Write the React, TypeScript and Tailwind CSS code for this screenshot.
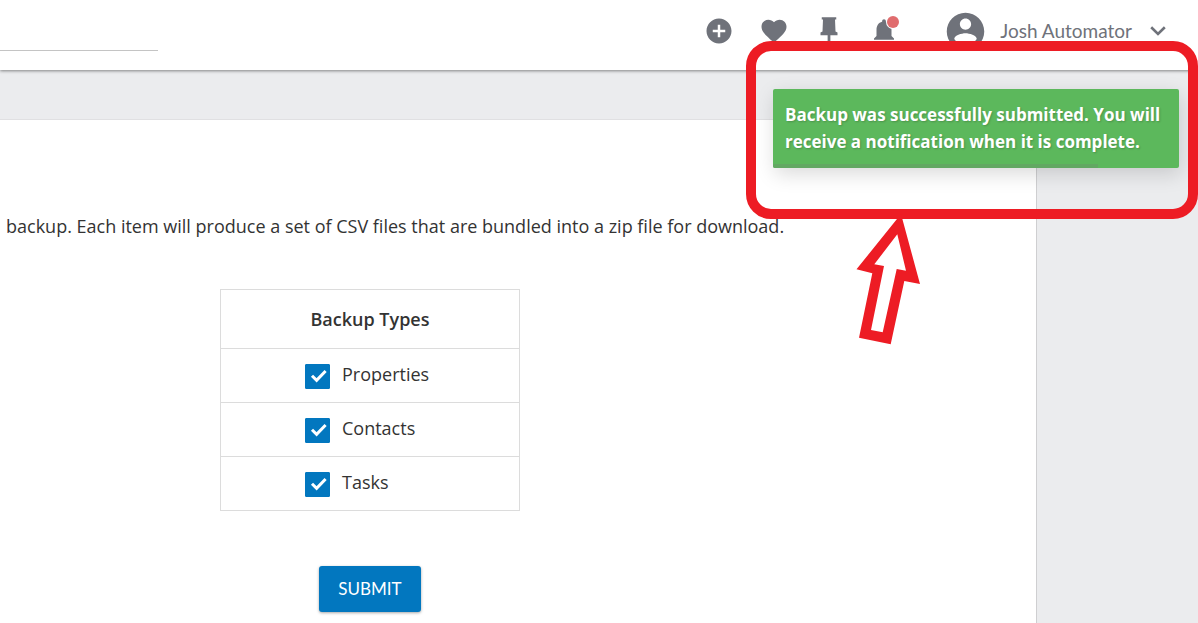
import React, { useState } from "react";

const ICONS = [
  {
    label: "Add",
    path: "M12 2C6.48 2 2 6.48 2 12s4.48 10 10 10 10-4.48 10-10S17.52 2 12 2zm5 11h-4v4h-2v-4H7v-2h4V7h2v4h4v2z",
  },
  {
    label: "Favorites",
    path: "M12 21.35l-1.45-1.32C5.4 15.36 2 12.28 2 8.5 2 5.42 4.42 3 7.5 3c1.74 0 3.41.81 4.5 2.09C13.09 3.81 14.76 3 16.5 3 19.58 3 22 5.42 22 8.5c0 3.78-3.4 6.86-8.55 11.54L12 21.35z",
  },
  {
    label: "Pinned",
    path: "M6.2 0.9H17.8V2.8H16.8L17.2 12.4L18.8 13.2V15.3H13.1V24H10.9V15.3H5.2V13.2L6.8 12.4L7.2 2.8H6.2Z",
  },
  {
    label: "Notifications",
    path: "M12 22c1.1 0 2-.9 2-2h-4c0 1.1.89 2 2 2zm6-6v-5c0-3.07-1.64-5.64-4.5-6.32V4c0-.83-.67-1.5-1.5-1.5s-1.5.67-1.5 1.5v.68C7.63 5.36 6 7.92 6 11v5l-2 2v1h16v-1l-2-2z",
    badge: true,
  },
];

const BACKUP_TYPES = ["Properties", "Contacts", "Tasks"];

const Header: React.FC = () => (
  <header className="relative z-10 flex h-[70px] items-center bg-white pr-8 text-[#6f727a] shadow-[0_1px_3px_rgba(0,0,0,0.45)]">
    <input
      type="search"
      aria-label="Search"
      className="h-8 w-[158px] border-b border-[#c4c4c4] outline-none"
    />
    <nav className="ml-auto flex items-center gap-[25px] pb-2">
      {ICONS.map((icon) => (
        <button key={icon.label} aria-label={icon.label} className="relative">
          <svg viewBox="0 0 24 24" className="size-[30px]" fill="currentColor">
            <path d={icon.path} />
          </svg>
          {icon.badge && (
            <span className="absolute top-0 right-0 size-3 rounded-full bg-[#e06c6e] ring-1 ring-white" />
          )}
        </button>
      ))}
    </nav>
    <button className="ml-11 flex items-center gap-3 pb-2">
      <svg viewBox="0 0 24 24" className="size-[45px]" fill="currentColor">
        <path d="M12 2C6.48 2 2 6.48 2 12s4.48 10 10 10 10-4.48 10-10S17.52 2 12 2zm0 3c1.66 0 3 1.34 3 3s-1.34 3-3 3-3-1.34-3-3 1.34-3 3-3zm0 14.2c-2.5 0-4.71-1.28-6-3.22.03-1.99 4-3.08 6-3.08 1.99 0 5.97 1.09 6 3.08-1.29 1.94-3.5 3.22-6 3.22z" />
      </svg>
      <span className="font-['Lato',sans-serif] text-[19px]">
        Josh Automator
      </span>
      <svg
        viewBox="0 0 16 10"
        className="ml-1.5 h-[10px] w-4"
        fill="none"
        stroke="currentColor"
        strokeWidth="2.6"
      >
        <path d="M1.2 1.3L8 8L14.8 1.3" />
      </svg>
    </button>
  </header>
);

const BackupTable: React.FC = () => {
  const [selected, setSelected] = useState<string[]>(BACKUP_TYPES);

  const toggle = (type: string) =>
    setSelected((prev) =>
      prev.includes(type) ? prev.filter((t) => t !== type) : [...prev, type]
    );

  return (
    <table className="w-[300px] border-collapse border border-[#dcdcdc]">
      <thead>
        <tr className="h-[59px] border-b border-[#dcdcdc]">
          <th className="p-0 text-center font-semibold">Backup Types</th>
        </tr>
      </thead>
      <tbody>
        {BACKUP_TYPES.map((type) => (
          <tr key={type} className="h-[54px] border-b border-[#dcdcdc]">
            <td className="p-0">
              <label className="flex items-center gap-3 pl-[84px]">
                <span className="grid pt-px">
                  <input
                    type="checkbox"
                    checked={selected.includes(type)}
                    onChange={() => toggle(type)}
                    className="peer col-start-1 row-start-1 size-[25px] appearance-none rounded-[1px] border border-[#0277bf] checked:bg-[#0277bf]"
                  />
                  <svg
                    viewBox="0 0 25 25"
                    className="pointer-events-none invisible col-start-1 row-start-1 size-[25px] peer-checked:visible"
                    fill="none"
                    stroke="white"
                    strokeWidth="3"
                  >
                    <path d="M7 11.8L11.6 16.4L20.6 7" />
                  </svg>
                </span>
                <span className="pb-1">{type}</span>
              </label>
            </td>
          </tr>
        ))}
      </tbody>
    </table>
  );
};

const Toast: React.FC = () => (
  <div
    role="status"
    className="absolute top-[89px] right-[19px] z-20 w-[406px] overflow-hidden rounded-[2px] bg-[#5cb85c] px-3 pt-3 pb-[13px] text-[17px] leading-[27px] font-bold text-white shadow-[2px_6px_20px_rgba(0,0,0,0.15)] text-shadow-[1px_1px_2px_rgba(0,0,0,0.2)]"
  >
    Backup was successfully submitted. You will receive a notification when it
    is complete.
    <span className="absolute bottom-0 left-0 h-1 w-4/5 bg-[#62a862]" />
  </div>
);

// red frame around the toast and the arrow pointing to it
const Callout: React.FC = () => (
  <div className="pointer-events-none absolute top-[41px] right-0 z-30 h-[178px] w-[452px] rounded-[25px] border-10 border-[#ed1c24]">
    <svg
      viewBox="856 210 66 136"
      className="absolute top-[159px] left-[100px] h-[136px] w-[66px]"
      fill="#ed1c24"
      fillRule="evenodd"
    >
      <path d="M901 214L920 284L904.3 281L890.7 344.3L859 337.7L872.3 273.3L856.5 269.3ZM897.3 234.3L874.3 264.3L884 266L871 330L882.7 332.3L896.7 269L906 270.7Z" />
    </svg>
  </div>
);

export default function App() {
  return (
    <div className="relative flex min-h-screen flex-col overflow-hidden bg-[#ebecee] font-['Open_Sans',sans-serif] text-lg text-[#333]">
      <Header />
      <main className="mt-[49px] mr-[161px] flex-1 border-t border-r border-t-[#e0e0e2] border-r-[#cfcfd1] bg-white pb-[11px]">
        <p className="mt-[93px] pl-[6px] leading-[27px]">
          backup. Each item will produce a set of CSV files that are bundled
          into a zip file for download.
        </p>
        <div className="mt-[49px] flex w-[740px] flex-col items-center gap-[55px]">
          <BackupTable />
          <button className="h-[46px] w-[102px] rounded-[3px] bg-[#0277bf] font-['Lato',sans-serif] text-[17px] text-white shadow-[0_1px_3px_rgba(0,0,0,0.35)]">
            SUBMIT
          </button>
        </div>
      </main>
      <Toast />
      <Callout />
    </div>
  );
}
